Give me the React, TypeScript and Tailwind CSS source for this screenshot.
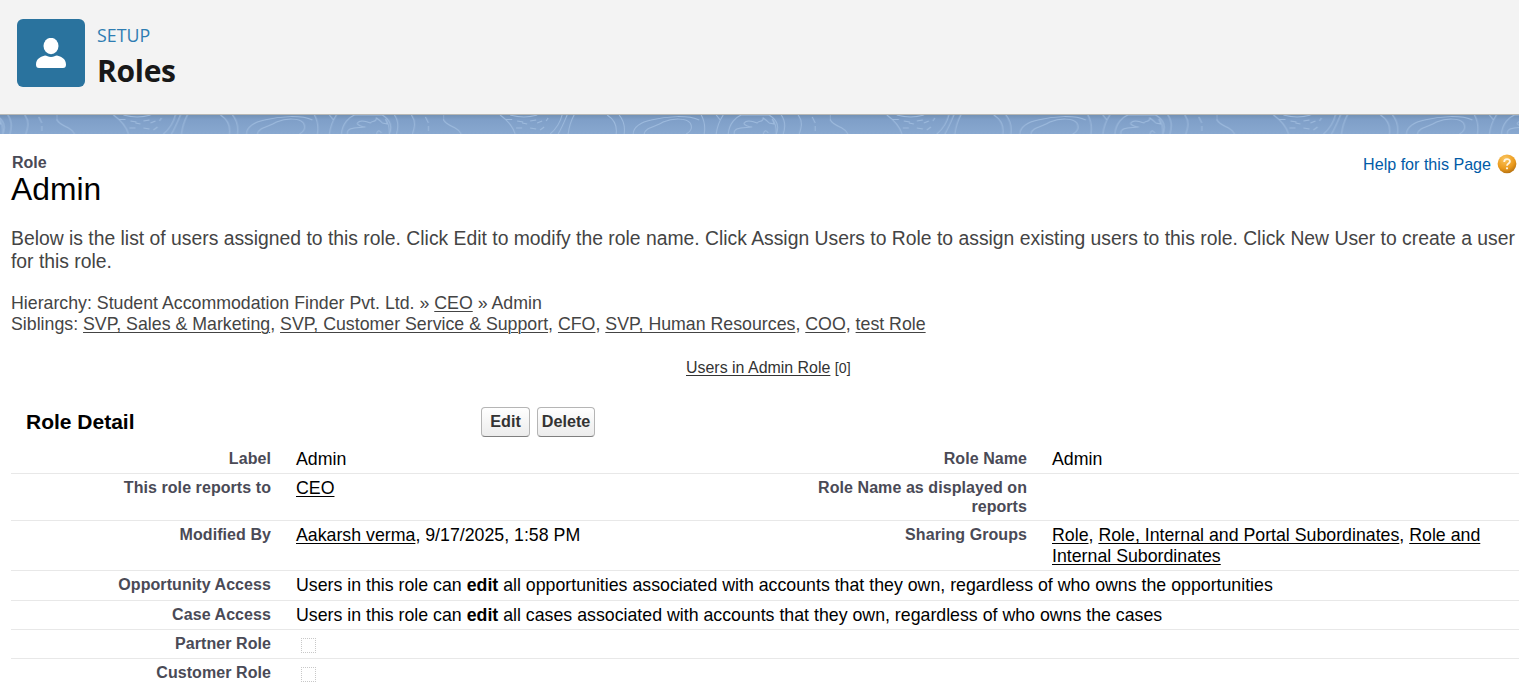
import React from "react";

const A = ({ children }: { children: React.ReactNode }) => (
  <a className="underline decoration-1 underline-offset-2">{children}</a>
);

const TopoBand = () => (
  <svg className="block h-full w-full" fill="none" stroke="#9dbadd" strokeWidth="1">
    <defs>
      <linearGradient id="shade" x1="0" y1="0" x2="0" y2="1">
        <stop offset="0" stopColor="#7391b5" />
        <stop offset="0.25" stopColor="#7f9fc8" />
        <stop offset="1" stopColor="#88a8d0" />
      </linearGradient>
      <pattern id="topo" x="56.5" y="0" width="386.67" height="19" patternUnits="userSpaceOnUse">
        <path d="M0 0V4C2 9 8 11 12 13S17 17 18 19" />
        <path d="M57 0C64 5 70 12 72 19" />
        <path d="M67 0Q81 4 94 0" />
        <path d="M62 4.500h7M74 6l6 1M87 6l6-1M73 13h6M87 13l6 1M103 6l2-3M97 15l4-3M79 8l5 1M94 8l5-2" />
        <path d="M119 0C117 8 113 14 107 19M124 0C121 7 119 12 115 19M131 0C127 7 126 12 125 19" />
        <path d="M164 0C172 5 174 12 173 19M176 0C181 6 182 12 181 19" />
        <path d="M190 19C190 12 198 7 208 5C224 1 245 0 256 5M201 19C201 13 212 12 220 7C230 3 243 3 247 8C250 13 247 17 243 19" />
        <path d="M258 0C262 7 262 13 261 19M273 19C274 11 276 6 280 0M273 0l4 5M285 19C286 8 293 2 298 0H326C334 5 336 12 333 19" />
        <path d="M291 19C290 12 300 13 308 12M309 12C306 12 300 10 301 8C303 5 309 6 314 8C316 5 320 8 320 3C323 5 325 7 326 8L331 9L329 4C333 8 333 14 333 19M320 19q2-6 5-1" />
        <path d="M338 0C343 7 342 13 340 19M355 0C360 7 358 13 356 19M369 2l3 6M372 11v5" />
      </pattern>
    </defs>
    <rect width="100%" height="100%" fill="url(#shade)" stroke="none" />
    <rect width="100%" height="100%" fill="url(#topo)" stroke="none" />
  </svg>
);

const HelpIcon = () => (
  <svg width="20" height="20" viewBox="0 0 20 20">
    <defs>
      <radialGradient id="orb" cx="0.4" cy="0.25" r="0.85">
        <stop offset="0" stopColor="#fbc660" />
        <stop offset="0.6" stopColor="#eb9a1c" />
        <stop offset="1" stopColor="#a5660f" />
      </radialGradient>
    </defs>
    <circle cx="10" cy="9.800" r="9.400" fill="url(#orb)" />
    <path d="M7.200 8c0-3.800 5.700-3.800 5.700-.5 0 2-2.900 2-2.900 4.200" fill="none" stroke="#fff6e4" strokeWidth="1.800" />
    <circle cx="10" cy="14.300" r="1.100" fill="#fff6e4" />
  </svg>
);

const Check = () => (
  <span className="mt-[4px] ml-[5px] block h-[15px] w-[15px] border border-dotted border-[#c8c8c8]" />
);

const Label = ({ children }: { children?: React.ReactNode }) => (
  <div className="w-[260px] shrink-0 text-right text-[16px] leading-[19px] font-bold tracking-[0.07px] text-[#4a4a56]">
    {children}
  </div>
);

const Row = ({ h, label, children, label2, value2 }: {
  h: string; label: string; children: React.ReactNode; label2?: string; value2?: React.ReactNode;
}) => (
  <div className={`flex border-b border-[#e8e8e8] ${h}`}>
    <Label>{label}</Label>
    <div className="ml-[25px] w-[471px] whitespace-nowrap">{children}</div>
    {label2 && (
      <>
        <Label>{label2}</Label>
        <div className="ml-[25px] w-[460px]">{value2}</div>
      </>
    )}
  </div>
);

export default function App() {
  return (
    <div className="h-[696px] w-[1519px] overflow-hidden bg-white font-['Liberation_Sans',Arial,sans-serif] text-black">
      <header className="flex h-[115px] border-b border-[#b8b8b4] bg-[#f3f3f3] pt-[19px] pl-[17px]">
        <div className="flex h-[68px] w-[68px] items-center justify-center rounded-[6px] bg-[#2a739e]">
          <svg width="30" height="30" viewBox="0 0 30 30" fill="#fff">
            <ellipse cx="15" cy="8" rx="7.500" ry="8.200" />
            <path d="M9 17.500C11 17.500 12 19 15 19S19 17.500 21 17.500C25 18.500 30 20.500 30 26.500Q30 30 27 30H3Q0 30 0 26.500C0 20.500 5 18.500 9 17.500Z" />
          </svg>
        </div>
        <div className="ml-[12px] font-['Open_Sans',sans-serif]">
          <div className="mt-[4px] text-[17.8px] leading-[24px] text-[#2e7db2]">SETUP</div>
          <h1 className="mt-[6px] text-[30px] leading-[36px] font-bold tracking-[-0.3px] text-[#181818]">Roles</h1>
        </div>
      </header>
      <div className="h-[19px]"><TopoBand /></div>

      <main className="pl-[11px]">
        <div className="flex justify-between pt-[19px]">
          <div>
            <div className="pl-[1px] text-[16px] leading-[19px] font-bold text-[#4a4a56]">Role</div>
            <h2 className="text-[31.8px] leading-[34px]">Admin</h2>
          </div>
          <a className="flex h-[22px] items-center gap-[6px] pr-[2px] text-[16.1px] text-[#015ba7]">
            Help for this Page <HelpIcon />
          </a>
        </div>

        <p className="mt-[21px] text-[19.34px] leading-[23px] whitespace-nowrap text-[#444]">
          Below is the list of users assigned to this role. Click Edit to modify the role name. Click Assign Users to Role to assign existing users to this role. Click New User to create a user<br />for this role.
        </p>

        <div className="mt-[20px] text-[17.75px] leading-[21px] text-[#444]">
          <div>Hierarchy: Student Accommodation Finder Pvt. Ltd. » <A>CEO</A> » Admin</div>
          <div>
            Siblings: <A>SVP, Sales &amp; Marketing</A>, <A>SVP, Customer Service &amp; Support</A>, <A>CFO</A>, <A>SVP, Human Resources</A>, <A>COO</A>, <A>test Role</A>
          </div>
        </div>

        <div className="mt-[23px] pl-[675px] text-[15.95px] leading-[20px] text-[#333]">
          <A>Users in Admin Role</A> <span className="text-[14.2px]">[0]</span>
        </div>

        <div className="mt-[29px] flex h-[30px] items-center">
          <h3 className="w-[470px] pl-[15px] text-[21px] font-bold">Role Detail</h3>
          <button className="mr-[7px] h-[30px] w-[49px] rounded-[4px] border border-[#b5b5b5] border-b-[#7f7f7f] bg-gradient-to-b from-white to-[#ececec] pb-[2px] text-[16.2px] leading-none font-bold text-[#333]">Edit</button>
          <button className="h-[30px] w-[58px] rounded-[4px] border border-[#b5b5b5] border-b-[#7f7f7f] bg-gradient-to-b from-white to-[#ececec] pb-[2px] text-[16.2px] leading-none font-bold text-[#333]">Delete</button>
        </div>

        <section className="mt-[7px] text-[17.75px] leading-[21px]">
          <Row h="h-[30px] pt-[5px]" label="Label" label2="Role Name" value2="Admin">Admin</Row>
          <Row h="h-[47px] pt-[4px]" label="This role reports to" label2="Role Name as displayed on reports"><A>CEO</A></Row>
          <Row h="h-[50px] pt-[4px]" label="Modified By" label2="Sharing Groups" value2={<><A>Role</A>, <A>Role, Internal and Portal Subordinates</A>, <A>Role and<br />Internal Subordinates</A></>}><A>Aakarsh verma</A>, 9/17/2025, 1:58 PM</Row>
          <Row h="h-[30px] pt-[4px]" label="Opportunity Access">Users in this role can <b>edit</b> all opportunities associated with accounts that they own, regardless of who owns the opportunities</Row>
          <Row h="h-[29px] pt-[4px]" label="Case Access">Users in this role can <b>edit</b> all cases associated with accounts that they own, regardless of who owns the cases</Row>
          <Row h="h-[29px] pt-[4px]" label="Partner Role"><Check /></Row>
          <Row h="h-[48px] pt-[4px]" label="Customer Role"><Check /></Row>
        </section>
      </main>
    </div>
  );
}
